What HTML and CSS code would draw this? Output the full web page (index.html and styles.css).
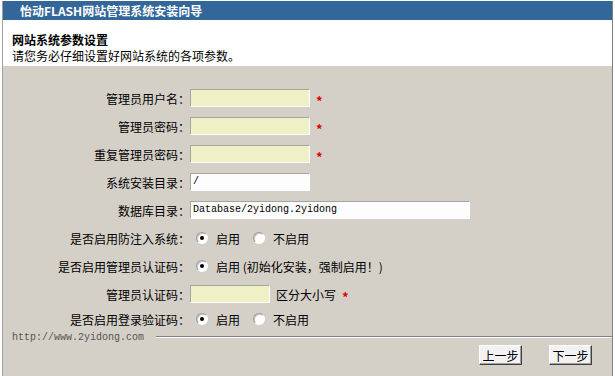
FILE: index.html
```html
<!DOCTYPE html>
<html lang="zh-CN">
<head>
  <meta charset="UTF-8">
  <title>怡动FLASH网站管理系统安装向导</title>
  <link rel="stylesheet" href="styles.css">
</head>
<body>
  <div class="frame">
    <!-- 标题栏 -->
    <div class="head">怡动FLASH网站管理系统安装向导</div>

    <!-- 说明 -->
    <div class="intro">
      <div class="intro-title">网站系统参数设置</div>
      <div>请您务必仔细设置好网站系统的各项参数。</div>
    </div>

    <!-- 参数表单 -->
    <div class="form">
      <div class="row">
        <div class="label">管理员用户名：</div>
        <div class="field"><span class="ipt ipt-yellow"></span><span class="star">*</span></div>
      </div>
      <div class="row">
        <div class="label">管理员密码：</div>
        <div class="field"><span class="ipt ipt-yellow"></span><span class="star">*</span></div>
      </div>
      <div class="row">
        <div class="label">重复管理员密码：</div>
        <div class="field"><span class="ipt ipt-yellow"></span><span class="star">*</span></div>
      </div>
      <div class="row">
        <div class="label">系统安装目录：</div>
        <div class="field"><span class="ipt">/</span></div>
      </div>
      <div class="row">
        <div class="label">数据库目录：</div>
        <div class="field"><span class="ipt ipt-wide">Database/2yidong.2yidong</span></div>
      </div>
      <div class="row">
        <div class="label">是否启用防注入系统：</div>
        <div class="field">
          <span class="radio on"></span><span class="opt">启用</span>
          <span class="radio"></span><span class="opt">不启用</span>
        </div>
      </div>
      <div class="row">
        <div class="label">是否启用管理员认证码：</div>
        <div class="field">
          <span class="radio on"></span><span class="opt">启用 (初始化安装，强制启用！)</span>
        </div>
      </div>
      <div class="row">
        <div class="label">管理员认证码：</div>
        <div class="field"><span class="ipt ipt-yellow ipt-short"></span><span class="hint">区分大小写</span><span class="star">*</span></div>
      </div>
      <div class="row row-last">
        <div class="label">是否启用登录验证码：</div>
        <div class="field">
          <span class="radio on"></span><span class="opt">启用</span>
          <span class="radio"></span><span class="opt">不启用</span>
        </div>
      </div>
    </div>

    <!-- 底部 -->
    <div class="foot">
      <span class="foot-url">http://www.2yidong.com</span>
      <span class="foot-line"></span>
    </div>
    <div class="btns">
      <button class="btn">上一步</button>
      <button class="btn">下一步</button>
    </div>
  </div>
</body>
</html>
```

FILE: styles.css
```css
body {
  margin: 0;
  padding: 0;
  background: #fff;
  font-family: "Noto Sans CJK SC", "DejaVu Sans", sans-serif;
  font-size: 12px;
  color: #000;
}

.frame {
  margin: 1px 0 0 2px;
  width: 609px;
  height: 375px;
  border-left: 1px solid #a0a0a0;
  border-right: 1px solid #808080;
  background: #d4d0c8;
  display: flex;
  flex-direction: column;
}

/* 标题栏 */
.head {
  height: 19px;
  line-height: 19px;
  background: #336699;
  color: #fff;
  font-weight: bold;
  padding-left: 17px;
}

/* 说明 */
.intro {
  background: #fff;
  padding: 12px 0 2px 9px;
  line-height: 16px;
}
.intro-title {
  font-weight: bold;
}

/* 表单 */
.form {
  padding-top: 18px;
}
.row {
  display: flex;
  align-items: center;
  height: 28px;
}
.row-last {
  height: 22px;
}
.label {
  width: 187px;
  text-align: right;
}
.field {
  display: flex;
  align-items: center;
}
.ipt {
  box-sizing: border-box;
  width: 120px;
  height: 18px;
  line-height: 16px;
  padding-left: 2px;
  background: #fdfdfd;
  border: 1px solid;
  border-color: #a6a6a0 #fff #fff #a6a6a0;
  font-family: "Liberation Mono", monospace;
  font-size: 10px;
}
.ipt-yellow {
  background: #eef0c6;
}
.ipt-wide {
  width: 280px;
}
.ipt-short {
  width: 80px;
}
.star {
  color: #d00;
  font-size: 13px;
  font-weight: bold;
  margin-left: 6px;
  margin-top: 5px;
}
.hint {
  margin-left: 6px;
}

/* 单选 */
.radio {
  box-sizing: border-box;
  width: 12px;
  height: 12px;
  margin-left: 6px;
  border-radius: 50%;
  background: #fff;
  border: 1px solid;
  border-color: #9a9a9a #fff #fff #9a9a9a;
  box-shadow: inset 1px 1px 0 #c8c8c8;
  position: relative;
}
.radio.on::after {
  content: "";
  position: absolute;
  left: 3px;
  top: 3px;
  width: 4px;
  height: 4px;
  border-radius: 50%;
  background: #000;
}
.opt {
  margin-left: 8px;
  margin-right: 7px;
}

/* 底部 */
.foot {
  display: flex;
  align-items: center;
  height: 14px;
  padding-left: 9px;
}
.foot-url {
  font-family: "Liberation Mono", monospace;
  font-size: 10px;
  color: #555;
}
.foot-line {
  flex: 1;
  margin-left: 12px;
  border-top: 1px solid #808080;
  border-bottom: 1px solid #fff;
}
.btns {
  display: flex;
  justify-content: flex-end;
  gap: 27px;
  padding: 1px 20px 0 0;
}
.btn {
  box-sizing: border-box;
  width: 43px;
  height: 20px;
  padding: 0;
  background: #f2f2f2;
  border: 1px solid;
  border-color: #fff #404040 #404040 #fff;
  box-shadow: inset -1px -1px 0 #a0a0a0;
  font-family: "Noto Sans CJK SC", sans-serif;
  font-size: 12px;
  color: #000;
}
```
